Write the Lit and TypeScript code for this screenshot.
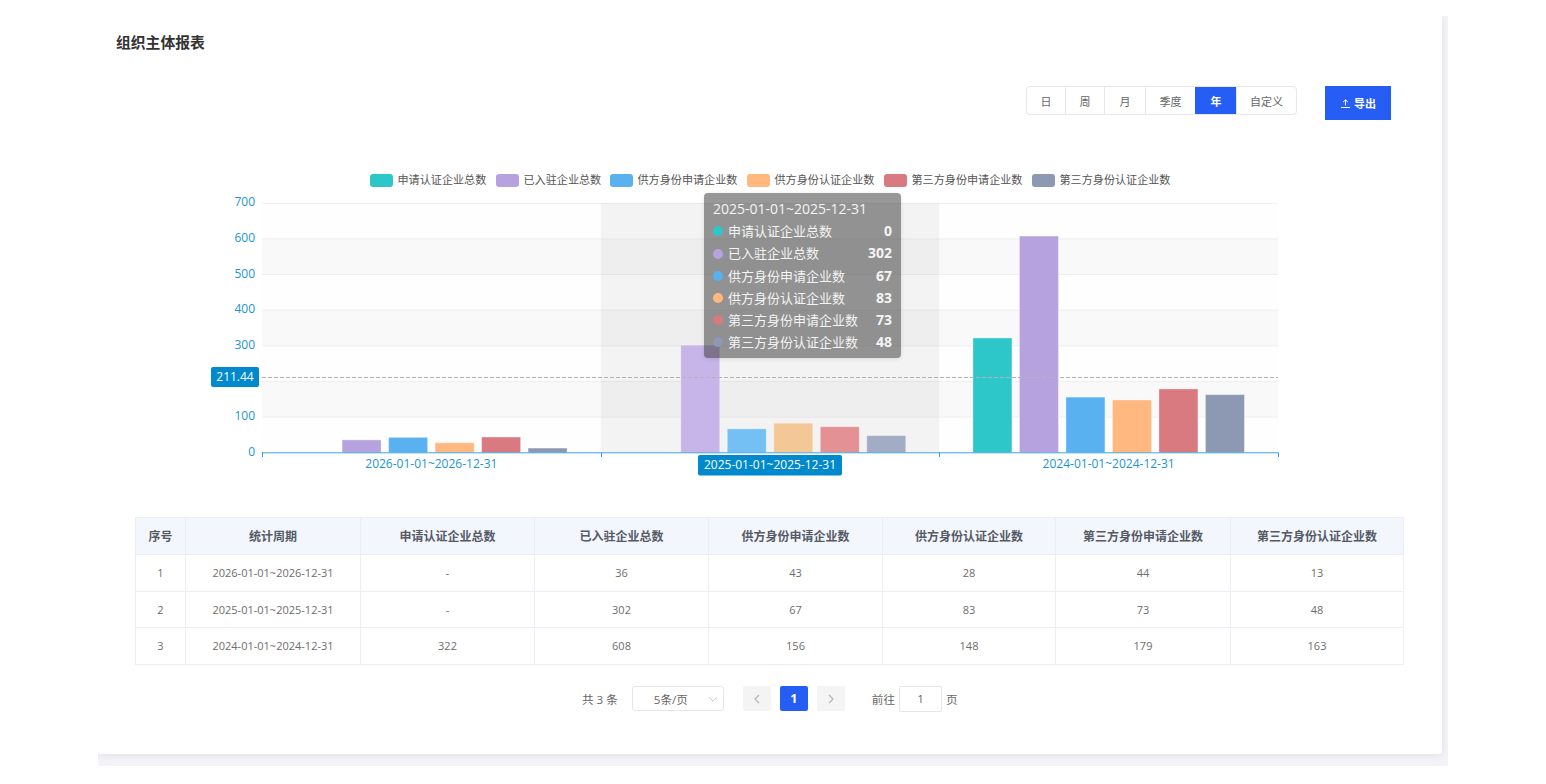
import { LitElement, html, css, svg } from 'lit';
import { customElement } from 'lit/decorators.js';

interface Series {
  name: string;
  color: string;
  hover: string;
}

const SERIES: Series[] = [
  { name: '申请认证企业总数', color: '#2ec7c9', hover: '#4fd0d2' },
  { name: '已入驻企业总数', color: '#b6a2de', hover: '#c7b4e9' },
  { name: '供方身份申请企业数', color: '#5ab1ef', hover: '#74c0f4' },
  { name: '供方身份认证企业数', color: '#ffb980', hover: '#f3c896' },
  { name: '第三方身份申请企业数', color: '#d87a80', hover: '#e49195' },
  { name: '第三方身份认证企业数', color: '#8d98b3', hover: '#a2acc4' },
];

const PERIODS = [
  { label: '2026-01-01~2026-12-31', values: [0, 36, 43, 28, 44, 13], cells: ['-', '36', '43', '28', '44', '13'] },
  { label: '2025-01-01~2025-12-31', values: [0, 302, 67, 83, 73, 48], cells: ['-', '302', '67', '83', '73', '48'] },
  { label: '2024-01-01~2024-12-31', values: [322, 608, 156, 148, 179, 163], cells: ['322', '608', '156', '148', '179', '163'] },
];

const RANGES = ['日', '周', '月', '季度', '年', '自定义'];
const RANGE_WIDTHS = [38, 39, 41, 50, 41, 60];
const LEGEND_X = [370, 496, 610, 747, 884, 1032];
const COL_WIDTHS = [50, 175, 174, 174, 174, 173, 175, 173];
// 200 sits under the 211.44 marker label, so it is not drawn
const Y_TICKS = [0, 100, 300, 400, 500, 600, 700];

// plot area, in page coordinates (the svg viewBox starts at 98,165)
const PLOT = { left: 262, right: 1278, top: 203.3, bottom: 452.7 };
const GROUP_W = (PLOT.right - PLOT.left) / 3;
const UNIT = (PLOT.bottom - PLOT.top) / 700;
const HOVERED = 1;

const yOf = (v: number) => PLOT.bottom - v * UNIT;

@customElement('app-root')
export class AppRoot extends LitElement {
  static styles = css`
    :host {
      display: block;
      font-family: 'Open Sans', 'Noto Sans CJK SC', sans-serif;
      color: #666;
    }

    .page {
      width: 1350px;
      height: 750px;
      margin: 16px 0 0 98px;
      background: #f4f4f8;
      overflow: hidden;
    }

    .card {
      width: 1344px;
      height: 738px;
      background: #fff;
      border-radius: 0 0 3px 3px;
      box-shadow: 0 1px 8px rgba(60, 60, 100, 0.12);
      box-sizing: border-box;
      padding: 15px 0 0;
    }

    h1 {
      margin: 0 0 0 18px;
      font-size: 14.8px;
      line-height: 22px;
      font-weight: 700;
      color: #333;
    }

    .toolbar {
      display: flex;
      justify-content: flex-end;
      align-items: flex-start;
      gap: 28px;
      margin-top: 33px;
      padding-right: 51px;
    }

    .ranges {
      display: flex;
      height: 29px;
      border: 1px solid #e6e8ef;
      border-radius: 4px;
      box-sizing: border-box;
      overflow: hidden;
    }

    .range {
      display: flex;
      align-items: center;
      justify-content: center;
      font-size: 11px;
      color: #666;
      border-left: 1px solid #e6e8ef;
      box-sizing: border-box;
    }

    .range:first-child {
      border-left: none;
    }

    .range.on {
      background: #265ef5;
      color: #fff;
      font-weight: 700;
      border-left-color: #265ef5;
    }

    .export {
      display: flex;
      align-items: center;
      justify-content: center;
      gap: 3px;
      width: 66px;
      height: 34px;
      background: #265ef5;
      color: #fff;
      font-size: 11px;
      font-weight: 700;
    }

    .chart {
      position: relative;
      height: 320px;
      margin-top: 45px;
    }

    .chart svg {
      display: block;
    }

    .chart text {
      font-family: 'Open Sans', 'Noto Sans CJK SC', sans-serif;
    }

    .tip {
      position: absolute;
      left: 606px;
      top: 28px;
      width: 197px;
      height: 165px;
      box-sizing: border-box;
      padding: 5px 9px;
      background: rgba(50, 50, 50, 0.5);
      border-radius: 4px;
      box-shadow: 0 1px 4px rgba(0, 0, 0, 0.1);
      color: #f4f4f4;
      font-size: 13px;
      line-height: 22.2px;
    }

    .tip-title {
      font-size: 14px;
    }

    .tip-row {
      display: flex;
      align-items: center;
    }

    .tip-dot {
      width: 10px;
      height: 10px;
      border-radius: 50%;
      margin-right: 5px;
    }

    .tip-row b {
      margin-left: auto;
      font-size: 14px;
      font-weight: 700;
    }

    table {
      width: 1268px;
      margin: 32px 0 0 37px;
      table-layout: fixed;
      border-collapse: collapse;
      font-size: 11px;
      text-align: center;
      color: #6d6d6d;
    }

    th,
    td {
      border: 1px solid #ebeef5;
      padding: 0;
    }

    th {
      height: 36px;
      background: #f3f6fd;
      color: #555b66;
      font-size: 12px;
      font-weight: 700;
    }

    td {
      height: 35.5px;
    }

    .pager {
      display: flex;
      align-items: center;
      margin: 21px 0 0 484px;
      height: 26px;
      font-size: 11.6px;
      color: #666;
    }

    .select {
      display: flex;
      align-items: center;
      width: 92px;
      height: 25px;
      margin-left: 14px;
      box-sizing: border-box;
      padding: 0 5px 0 21px;
      border: 1px solid #e4e6ee;
      border-radius: 3px;
    }

    .select svg {
      margin-left: auto;
    }

    .nav {
      display: flex;
      align-items: center;
      justify-content: center;
      width: 28px;
      height: 25px;
      margin-left: 9px;
      background: #f4f4f5;
      border-radius: 2px;
    }

    .nav.first {
      margin-left: 19px;
    }

    .nav.on {
      background: #265ef5;
      color: #fff;
      font-weight: 700;
      font-size: 12.5px;
    }

    .jump {
      display: flex;
      align-items: center;
      margin-left: 27px;
      gap: 4px;
    }

    .jump-input {
      display: flex;
      align-items: center;
      justify-content: center;
      width: 43px;
      height: 26px;
      box-sizing: border-box;
      border: 1px solid #e4e6ee;
      border-radius: 2px;
    }
  `;

  private renderBands() {
    return [0, 1, 2, 3, 4, 5, 6].map((i) => {
      const top = yOf(700 - i * 100);
      return svg`
        <rect x=${PLOT.left} y=${top} width=${PLOT.right - PLOT.left} height=${100 * UNIT}
          fill=${i % 2 ? '#f9f9f9' : '#fefefe'}></rect>
        <line x1=${PLOT.left} x2=${PLOT.right} y1=${top} y2=${top} stroke="#eeeeee"></line>
      `;
    });
  }

  private renderBars() {
    return PERIODS.map((period, g) =>
      period.values.map((v, k) => {
        if (!v) return null;
        const x = PLOT.left + g * GROUP_W + 33.6 + k * 46.5;
        const s = SERIES[k];
        return svg`<rect x=${x} y=${yOf(v)} width="39" height=${v * UNIT}
          fill=${g === HOVERED ? s.hover : s.color} stroke="rgba(255,255,255,.35)"></rect>`;
      })
    );
  }

  private renderChart() {
    const hoverX = PLOT.left + HOVERED * GROUP_W;
    return svg`
      <svg width="1344" height="320" viewBox="98 165 1344 320">
        ${SERIES.map(
          (s, i) => svg`
            <rect x=${LEGEND_X[i]} y="174" width="23" height="13" rx="3" fill=${s.color}></rect>
            <text x=${LEGEND_X[i] + 27.5} y="184" font-size="11.1" fill="#555">${s.name}</text>
          `
        )}
        ${this.renderBands()}
        <rect x=${hoverX} y=${PLOT.top} width=${GROUP_W} height=${PLOT.bottom - PLOT.top} fill="rgba(150,150,150,.1)"></rect>
        ${this.renderBars()}
        <line x1=${PLOT.left} x2=${PLOT.right} y1="377.5" y2="377.5" stroke="#b4b4b4" stroke-dasharray="4 2"></line>
        <line x1=${PLOT.left} x2=${PLOT.right} y1="452.8" y2="452.8" stroke="#3ea5dd"></line>
        ${[0, 1, 2, 3].map((i) => {
          const x = Math.round(PLOT.left + i * GROUP_W) + 0.5;
          return svg`<line x1=${x} x2=${x} y1="452.5" y2="457" stroke="#2f9ed9"></line>`;
        })}
        ${Y_TICKS.map(
          (v) => svg`<text x="255" y=${yOf(v) + 3} font-size="12" text-anchor="end" fill="#1a94d5">${v}</text>`
        )}
        ${PERIODS.map((p, g) =>
          g === HOVERED
            ? null
            : svg`<text x=${PLOT.left + (g + 0.5) * GROUP_W} y="468" font-size="12" text-anchor="middle" fill="#1a94d5">${p.label}</text>`
        )}
        <rect x="211" y="367" width="48" height="20" rx="2" fill="#008acd"></rect>
        <text x="235" y="380.5" font-size="12" text-anchor="middle" fill="#fff">211.44</text>
        <rect x="698" y="455" width="144" height="20.5" rx="2" fill="#008acd"></rect>
        <text x="770" y="468.5" font-size="12" text-anchor="middle" fill="#fff">${PERIODS[HOVERED].label}</text>
      </svg>
    `;
  }

  render() {
    const hovered = PERIODS[HOVERED];
    return html`
      <div class="page">
        <div class="card">
          <h1>组织主体报表</h1>

          <div class="toolbar">
            <div class="ranges">
              ${RANGES.map(
                (r, i) => html`<div class="range ${r === '年' ? 'on' : ''}" style="width: ${RANGE_WIDTHS[i]}px">${r}</div>`
              )}
            </div>
            <div class="export">
              <svg width="11" height="11" viewBox="0 0 11 11" fill="none" stroke="#fff" stroke-width="1">
                <path d="M1 9.5h9M5.5 7.5V2M3 4.2 5.5 1.8 8 4.2" />
              </svg>
              导出
            </div>
          </div>

          <div class="chart">
            ${this.renderChart()}
            <div class="tip">
              <div class="tip-title">${hovered.label}</div>
              ${SERIES.map(
                (s, i) => html`<div class="tip-row">
                  <span class="tip-dot" style="background: ${s.color}"></span>
                  ${s.name}
                  <b>${hovered.values[i]}</b>
                </div>`
              )}
            </div>
          </div>

          <table>
            <colgroup>
              ${COL_WIDTHS.map((w) => html`<col style="width: ${w}px" />`)}
            </colgroup>
            <thead>
              <tr>
                <th>序号</th>
                <th>统计周期</th>
                ${SERIES.map((s) => html`<th>${s.name}</th>`)}
              </tr>
            </thead>
            <tbody>
              ${PERIODS.map(
                (p, i) => html`<tr>
                  <td>${i + 1}</td>
                  <td>${p.label}</td>
                  ${p.cells.map((c) => html`<td>${c}</td>`)}
                </tr>`
              )}
            </tbody>
          </table>

          <div class="pager">
            <span>共 3 条</span>
            <div class="select">
              5条/页
              <svg width="10" height="10" viewBox="0 0 10 10" fill="none" stroke="#c4c6cc">
                <path d="M1 3.2 5 7.2 9 3.2" />
              </svg>
            </div>
            <div class="nav first">
              <svg width="10" height="12" viewBox="0 0 10 12" fill="none" stroke="#b4b6bb" stroke-width="1.3">
                <path d="M7 2 3 6 7 10" />
              </svg>
            </div>
            <div class="nav on">1</div>
            <div class="nav">
              <svg width="10" height="12" viewBox="0 0 10 12" fill="none" stroke="#b4b6bb" stroke-width="1.3">
                <path d="M3 2 7 6 3 10" />
              </svg>
            </div>
            <div class="jump">
              <span>前往</span>
              <div class="jump-input">1</div>
              <span>页</span>
            </div>
          </div>
        </div>
      </div>
    `;
  }
}

declare global {
  interface HTMLElementTagNameMap {
    'app-root': AppRoot;
  }
}
